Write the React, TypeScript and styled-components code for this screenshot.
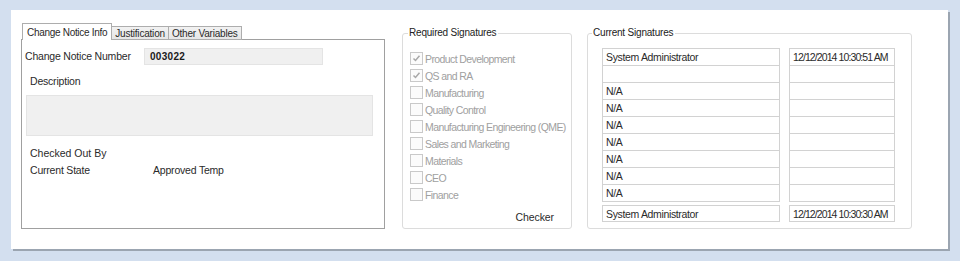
import React from 'react';
import styled, { createGlobalStyle } from 'styled-components';

const GlobalStyle = createGlobalStyle`
  html, body { margin: 0; padding: 0; background: #d3dfef; }
  body { font-family: "Liberation Sans", Arial, sans-serif; font-size: 10.5px; color: #2a2a2a; }
  * { box-sizing: border-box; }
`;

const REQUIRED = [
  { label: 'Product Development', checked: true },
  { label: 'QS and RA', checked: true },
  { label: 'Manufacturing', checked: false },
  { label: 'Quality Control', checked: false },
  { label: 'Manufacturing Engineering (QME)', checked: false },
  { label: 'Sales and Marketing', checked: false },
  { label: 'Materials', checked: false },
  { label: 'CEO', checked: false },
  { label: 'Finance', checked: false },
];

const CURRENT = [
  { name: 'System Administrator', date: '12/12/2014 10:30:51 AM' },
  { name: '', date: '' },
  { name: 'N/A', date: '' },
  { name: 'N/A', date: '' },
  { name: 'N/A', date: '' },
  { name: 'N/A', date: '' },
  { name: 'N/A', date: '' },
  { name: 'N/A', date: '' },
  { name: 'N/A', date: '' },
];

const Page = styled.div`
  width: 960px; height: 261px;
  padding: 10px 0 0 11px;
`;
const Panel = styled.div`
  width: 937px; height: 239px;
  background: #fff;
  box-shadow: 2px 2px 0 #9ba5b1;
  display: flex; align-items: flex-start;
  padding: 13px 0 0 10px;
`;

/* tabs */
const TabControl = styled.div`
  width: 364px; display: flex; flex-direction: column;
`;
const TabStrip = styled.div`
  display: flex; align-items: flex-end; height: 17px;
  padding-left: 1px; position: relative; z-index: 1;
`;
const Tab = styled.div<{ $active?: boolean }>`
  height: ${p => (p.$active ? 17 : 14)}px;
  padding: 0 ${p => (p.$active ? 4 : 3)}px;
  display: flex; align-items: center;
  border: 1px solid #adadad;
  border-bottom: ${p => (p.$active ? 'none' : '1px solid #adadad')};
  margin-left: ${p => (p.$active ? 0 : -1)}px;
  background: ${p => (p.$active ? '#fff' : 'linear-gradient(#f2f2f2, #e6e6e6)')};
  font-size: 10px;
  letter-spacing: ${p => (p.$active ? -0.3 : -0.2)}px;
  white-space: nowrap;
`;
const TabBody = styled.div`
  height: 190px; margin-top: -1px;
  border: 1px solid #a0a0a0;
  padding: 0 11px 0 3px;
`;
const FieldRow = styled.div`
  display: flex; align-items: center; height: 17px; margin-top: 8px;
`;
const Label = styled.div<{ $w?: number; $indent?: number }>`
  width: ${p => (p.$w ? `${p.$w}px` : 'auto')};
  padding-left: ${p => p.$indent ?? 0}px;
  letter-spacing: -0.2px;
  white-space: nowrap;
`;
const RowLabel = styled(Label)`
  margin-top: -2px;
`;
const ReadOnlyBox = styled.div`
  width: 179px; height: 17px;
  background: #f0f0f0; border: 1px solid #e4e4e4;
  font-weight: bold; font-size: 10px; padding: 2px 5px 0;
  letter-spacing: 0.3px; color: #1a1a1a;
`;
const DescLabel = styled(Label)`
  margin-top: 9px; height: 14px; display: flex; align-items: center;
`;
const DescArea = styled.div`
  margin: 7px 0 0 1px; height: 41px;
  background: #f0f0f0; border: 1px solid #e4e4e4;
`;
const InfoRow = styled.div<{ $top: number }>`
  display: flex; align-items: center; height: 14px; margin-top: ${p => p.$top}px;
  padding-left: 5px;
`;

/* group boxes */
const Group = styled.fieldset<{ $w: number; $ml: number }>`
  width: ${p => p.$w}px; height: 202px; margin: 4px 0 0 ${p => p.$ml}px;
  padding: 0; border: 1px solid #dcdcdc; border-radius: 3px;
  min-width: 0; position: relative;
`;
const Legend = styled.legend<{ $ml?: number }>`
  padding: 0 2px 0 1px; margin-left: ${p => p.$ml ?? 5}px; font-size: 10px; line-height: 12px;
  letter-spacing: -0.2px; color: #222;
`;
const CheckList = styled.div`
  display: flex; flex-direction: column; padding: 11px 0 0 7px;
`;
const CheckRow = styled.div`
  display: flex; align-items: center; height: 17px; gap: 2px;
  color: #a0a0a0; letter-spacing: -0.6px; white-space: nowrap;
`;
const Box = styled.span`
  flex-shrink: 0;
  width: 13px; height: 13px; border: 1px solid #c9c9c9; background: #fbfbfb;
  display: inline-flex; align-items: center; justify-content: center;
`;
const Checker = styled.div`
  position: absolute; right: 17px; bottom: 5px; letter-spacing: -0.1px;
`;
const SigList = styled.div`
  padding: 9px 0 0 14px; display: flex; flex-direction: column;
`;
const SigRow = styled.div<{ $gap?: number }>`
  display: flex; gap: 9px; margin-top: ${p => p.$gap ?? -1}px;
  &:first-child { margin-top: 0; }
`;
const Cell = styled.div<{ $w: number; $h?: number; $date?: boolean }>`
  width: ${p => p.$w}px; height: ${p => p.$h ?? 18}px;
  border: 1px solid #d2d2d2;
  padding: 0 3px; display: flex; align-items: center;
  letter-spacing: ${p => (p.$date ? '-0.9px' : '-0.35px')};
  white-space: nowrap;
`;

function Check({ checked }: { checked: boolean }) {
  return (
    <Box>
      {checked && (
        <svg width="9" height="9" viewBox="0 0 9 9">
          <path d="M1.5 4.5 L3.5 6.5 L7.5 1.8" fill="none" stroke="#a8a8a8" strokeWidth="1.5" />
        </svg>
      )}
    </Box>
  );
}

export default function App() {
  const last = { name: 'System Administrator', date: '12/12/2014 10:30:30 AM' };
  return (
    <Page>
      <GlobalStyle />
      <Panel>
        <TabControl>
          <TabStrip>
            <Tab $active>Change Notice Info</Tab>
            <Tab>Justification</Tab>
            <Tab>Other Variables</Tab>
          </TabStrip>
          <TabBody>
            <FieldRow>
              <RowLabel $w={119}>Change Notice Number</RowLabel>
              <ReadOnlyBox>003022</ReadOnlyBox>
            </FieldRow>
            <DescLabel $indent={5}>Description</DescLabel>
            <DescArea />
            <InfoRow $top={10}>Checked Out By</InfoRow>
            <InfoRow $top={3}>
              <Label $w={123}>Current State</Label>
              <Label>Approved Temp</Label>
            </InfoRow>
          </TabBody>
        </TabControl>

        <Group $w={170} $ml={17}>
          <Legend>Required Signatures</Legend>
          <CheckList>
            {REQUIRED.map(r => (
              <CheckRow key={r.label}>
                <Check checked={r.checked} />
                {r.label}
              </CheckRow>
            ))}
          </CheckList>
          <Checker>Checker</Checker>
        </Group>

        <Group $w={325} $ml={15}>
          <Legend $ml={4}>Current Signatures</Legend>
          <SigList>
            {CURRENT.map((s, i) => (
              <SigRow key={i}>
                <Cell $w={178}>{s.name}</Cell>
                <Cell $w={106} $date>{s.date}</Cell>
              </SigRow>
            ))}
            <SigRow $gap={3}>
              <Cell $w={178} $h={17}>{last.name}</Cell>
              <Cell $w={106} $h={17} $date>{last.date}</Cell>
            </SigRow>
          </SigList>
        </Group>
      </Panel>
    </Page>
  );
}
